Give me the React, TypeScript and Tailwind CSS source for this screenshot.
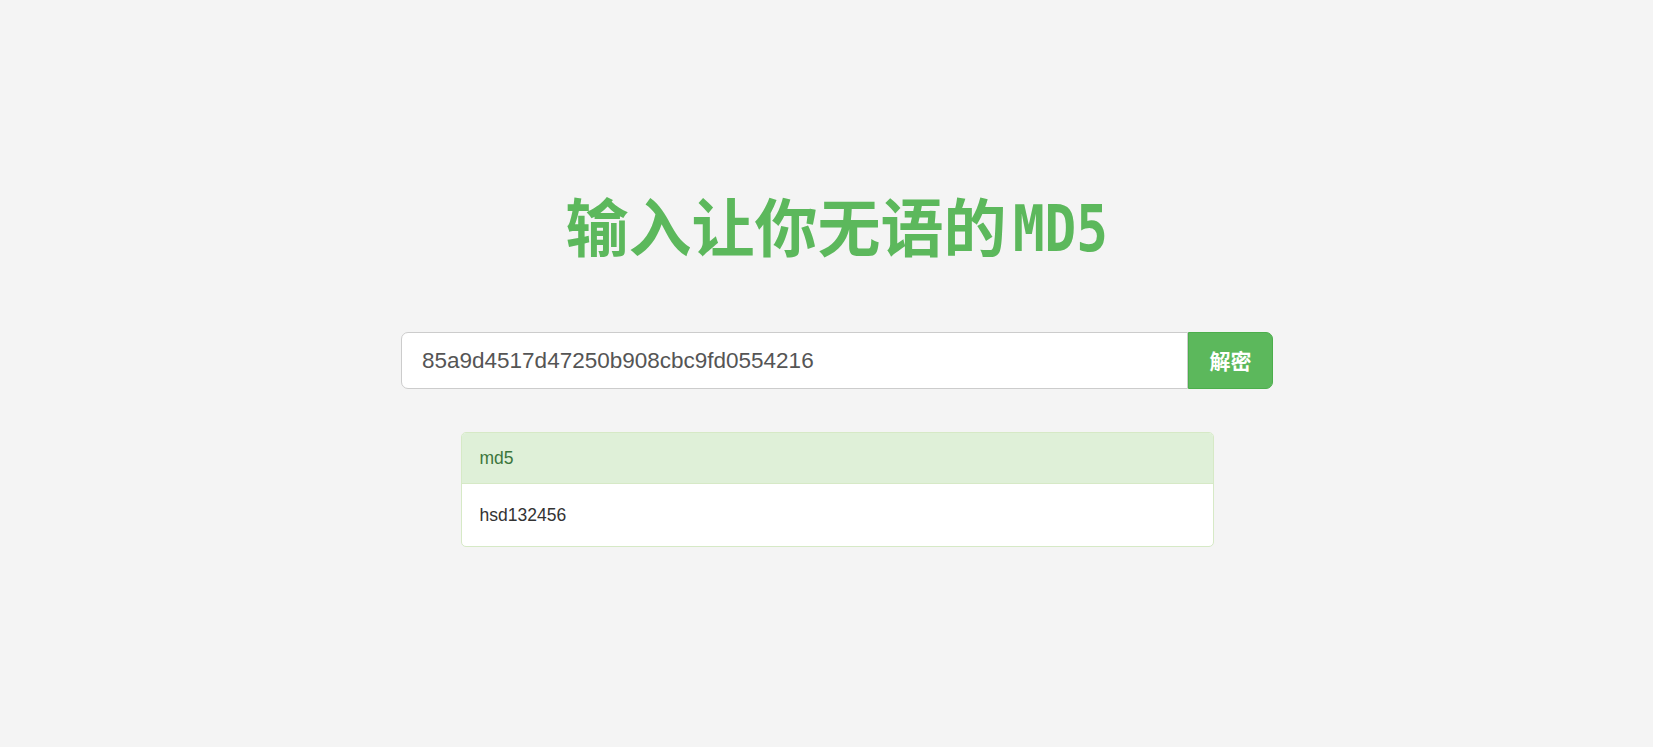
import React from 'react'

export default function App() {
  return (
    <div className="min-h-screen w-full bg-[#f4f4f4] pt-[183px] font-['Liberation_Sans','Noto_Sans_CJK_SC',sans-serif]">
      <div className="ml-[401px] flex w-[872px] flex-col items-center">
        <h1 className="flex h-[80px] items-center font-['Noto_Sans_CJK_SC',sans-serif] text-[63px] font-bold leading-none text-[#5cb85c]">
          <span>输入让你无语的</span>
          <span className="ml-[6px] mt-[12px] inline-block w-[96px] origin-left scale-x-[0.82] whitespace-nowrap font-['DejaVu_Sans_Mono',monospace] text-[64px] font-bold">
            MD5
          </span>
        </h1>

        <div className="mt-[69px] flex h-[57px] w-full">
          <input
            readOnly
            value="85a9d4517d47250b908cbc9fd0554216"
            className="h-full flex-1 rounded-l-[7px] border border-[#cccccc] bg-white px-[20px] text-[22.5px] text-[#555555] outline-none"
          />
          <button className="h-full w-[85px] rounded-r-[7px] border border-[#4cae4c] bg-[#5cb85c] font-['Noto_Sans_CJK_SC',sans-serif] text-[21px] font-bold text-white">
            解密
          </button>
        </div>

        <div className="mt-[43px] w-[753px] overflow-hidden rounded-[5px] border border-[#d6e9c6] bg-white">
          <div className="flex h-[51px] items-center border-b border-[#d6e9c6] bg-[#dff0d8] px-[18px] text-[17.5px] text-[#3c763d]">
            md5
          </div>
          <div className="flex h-[62px] items-center px-[18px] text-[17.5px] text-[#333333]">
            hsd132456
          </div>
        </div>
      </div>
    </div>
  )
}
